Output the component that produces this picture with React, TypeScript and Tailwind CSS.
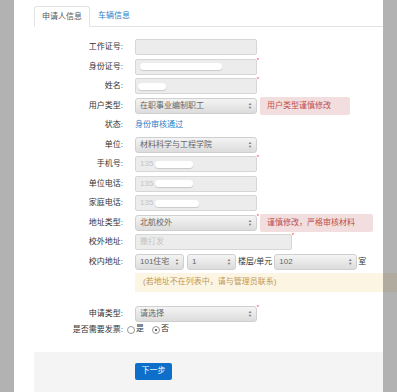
import type { ReactNode } from "react";

const Star = () => (
  <span className="absolute -right-[3px] -top-[3px] text-[6px] leading-none text-red-500">*</span>
);

const Arrows = () => (
  <span className="flex flex-col items-center text-[#777] leading-none">
    <span className="text-[4px]">▲</span>
    <span className="text-[4px]">▼</span>
  </span>
);

const Blob = ({ w, ml = 0 }: { w: number; ml?: number }) => (
  <span
    className="inline-block h-[7px] rounded-full bg-white shadow-[0_1px_1px_rgba(0,0,0,0.15)]"
    style={{ width: w, marginLeft: ml }}
  />
);

const Row = ({ label, children }: { label: string; children: ReactNode }) => (
  <div className="flex h-[16px] items-center">
    <div className="w-[90px] pr-[1px] text-right text-[#333]">{label}</div>
    <div className="ml-[11px] flex items-center">{children}</div>
  </div>
);

const Input = ({
  w = 122,
  star,
  children,
}: {
  w?: number;
  star?: boolean;
  children?: ReactNode;
}) => (
  <div
    className="relative flex h-[16px] items-center rounded-[2px] border border-[#d6d6d6] bg-[#ececec] px-[4px] text-[#c4c4c4]"
    style={{ width: w }}
  >
    {children}
    {star && <Star />}
  </div>
);

const Select = ({
  w = 122,
  star,
  text,
}: {
  w?: number;
  star?: boolean;
  text: string;
}) => (
  <div
    className="relative flex h-[16px] items-center justify-between rounded-[3px] border border-[#cfcfcf] bg-gradient-to-b from-[#f4f4f4] to-[#dcdcdc] pl-[4px] pr-[4px] text-[#666]"
    style={{ width: w }}
  >
    <span>{text}</span>
    <Arrows />
    {star && <Star />}
  </div>
);

const Alert = ({ w, children }: { w: number; children: ReactNode }) => (
  <div
    className="ml-[3px] flex h-[18px] items-center rounded-[2px] bg-[#f2dede] pl-[7px] text-[#c0504d]"
    style={{ width: w }}
  >
    {children}
  </div>
);

const Radio = ({ checked }: { checked?: boolean }) => (
  <span className="flex h-[8px] w-[8px] items-center justify-center rounded-full border border-[#999] bg-white">
    {checked && <span className="h-[2px] w-[2px] rounded-full bg-[#333]" />}
  </span>
);

export default function App() {
  return (
    <div className="relative h-[392px] w-[397px] overflow-hidden bg-white font-['Liberation_Sans','Noto_Sans_CJK_SC',sans-serif] text-[8px]">
      <div className="pl-[34px] pt-[7px]">
        {/* tabs */}
        <div className="flex h-[20px] w-[349px] items-end border-b border-[#e3e3e3]">
          <div className="-mb-px flex h-[21px] items-center rounded-t-[3px] border border-b-white border-[#e3e3e3] bg-white px-[7px] text-[#555]">
            申请人信息
          </div>
          <div className="flex h-[20px] items-center px-[8px] text-[#2a80c8]">车辆信息</div>
        </div>

        {/* form */}
        <div className="mt-[12px] flex flex-col gap-[3.5px]">
          <Row label="工作证号:">
            <Input />
          </Row>
          <Row label="身份证号:">
            <Input star>
              <Blob w={82} />
            </Input>
          </Row>
          <Row label="姓名:">
            <Input star>
              <Blob w={28} ml={-2} />
            </Input>
          </Row>
          <Row label="用户类型:">
            <Select text="在职事业编制职工" />
            <Alert w={90}>用户类型谨慎修改</Alert>
          </Row>
          <Row label="状态:">
            <span className="text-[#2a80c8]">身份审核通过</span>
          </Row>
          <Row label="单位:">
            <Select text="材料科学与工程学院" />
          </Row>
          <Row label="手机号:">
            <Input star>
              <span>135</span>
              <Blob w={38} ml={2} />
            </Input>
          </Row>
          <Row label="单位电话:">
            <Input>
              <span>135</span>
              <Blob w={38} ml={2} />
            </Input>
          </Row>
          <Row label="家庭电话:">
            <Input>
              <span>135</span>
              <Blob w={44} ml={2} />
            </Input>
          </Row>
          <Row label="地址类型:">
            <Select star text="北航校外" />
            <Alert w={113}>谨慎修改，严格审核材料</Alert>
          </Row>
          <Row label="校外地址:">
            <Input w={157} star>
              <span>撒打发</span>
            </Input>
          </Row>
          <Row label="校内地址:">
            <Select w={49} text="101住宅" />
            <span className="ml-[3px]" />
            <Select w={49} text="1" />
            <span className="mx-[2px] text-[#333]">楼层/单元</span>
            <Select w={83} text="102" />
            <span className="ml-[1px] text-[#333]">室</span>
          </Row>
        </div>

        <div className="ml-[101px] mt-[3px] flex h-[19px] items-center bg-[#fcf5e3] pl-[8px] text-[#c09553]">
          (若地址不在列表中，请与管理员联系)
        </div>

        <div className="mt-[14px] flex flex-col gap-[2px]">
          <Row label="申请类型:">
            <Select star text="请选择" />
          </Row>
          <div className="flex h-[12px] items-center">
            <div className="w-[90px] pr-[1px] text-right text-[#333]">是否需要发票:</div>
            <div className="ml-[3px] flex items-center gap-[1px] text-[#333]">
              <Radio />
              <span className="-mt-[2px]">是</span>
              <span className="ml-[6px]" />
              <Radio checked />
              <span className="-mt-[2px]">否</span>
            </div>
          </div>
        </div>

        {/* footer */}
        <div className="mt-[16px] flex h-[60px] w-[349px] items-start bg-[#f4f4f4] pl-[101px] pt-[11px]">
          <button className="flex h-[17px] w-[37px] items-center justify-center rounded-[2px] bg-[#0d6fca] text-white">
            下一步
          </button>
        </div>
      </div>

      {/* side overlays */}
      <div className="absolute left-0 top-0 h-full w-[14px] bg-black/30" />
      <div className="absolute left-[383px] top-0 h-full w-[14px] bg-black/30" />
    </div>
  );
}
